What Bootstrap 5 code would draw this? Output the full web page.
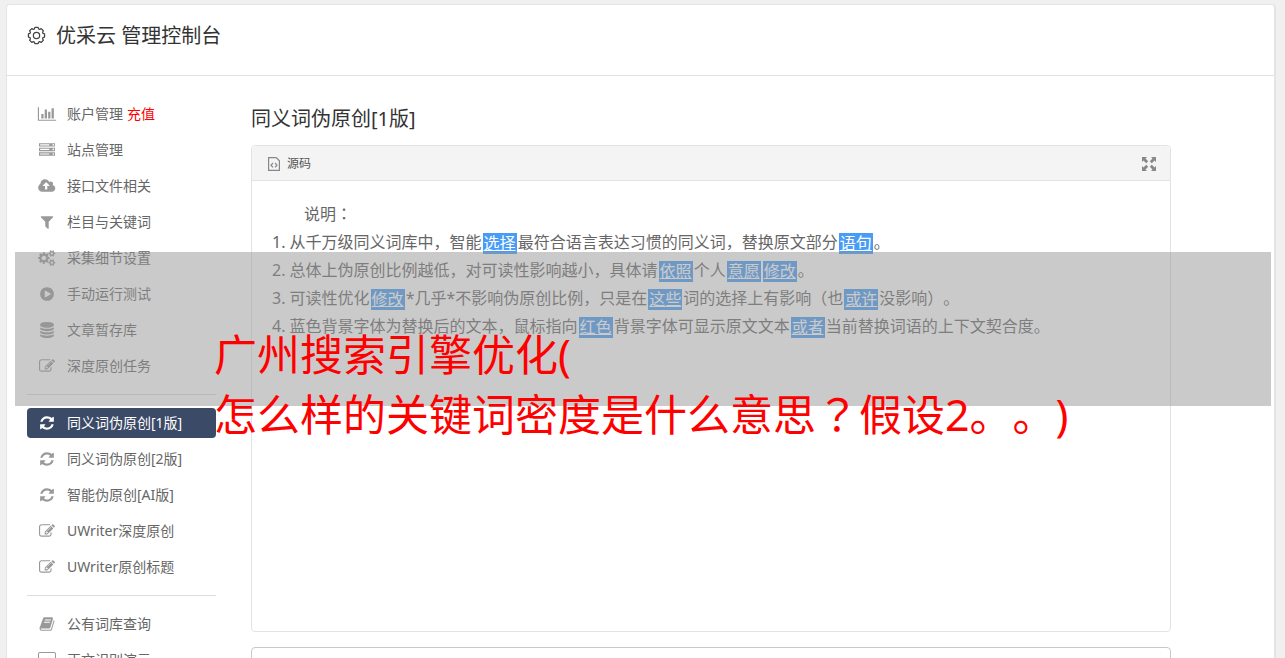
<!DOCTYPE html>
<html lang="zh-CN">
<head>
<meta charset="utf-8">
<meta name="viewport" content="width=device-width, initial-scale=1">
<title>优采云 管理控制台</title>
<link href="https://cdn.jsdelivr.net/npm/bootstrap@5.3.0/dist/css/bootstrap.min.css" rel="stylesheet">
<style>
  body { font-family: "Noto Sans", "Noto Sans CJK SC", sans-serif; font-size: 14px; color: #555; background: #f0f0f0; height: 100vh; overflow: hidden; text-spacing-trim: space-all; }
  .console { margin: 4px 9px 0 6px; background: #fff; border: 1px solid #e4e4e4; border-right-width: 2px; border-radius: 4px 4px 0 0; min-height: 100vh; }
  .console-head { height: 71px; padding: 0 20px 10px; border-bottom: 1px solid #e2e2e2; color: #333; }
  .console-head h1, .main-area h2 { font-size: 20px; line-height: 30px; font-weight: 400; margin: 0; color: #333; }
  .console-head h1 { padding: 2px 0 0 10px; }
  .console-body { padding: 23px 20px 0; gap: 35px; }
  .side { flex: 0 0 189px; }
  .side .nav-link { height: 30px; padding: 0; color: #666; border-radius: 4px; line-height: 30px; white-space: nowrap; }
  .side .nav { gap: 6px; }
  .side .ico { width: 40px; flex: none; color: #999; display: flex; justify-content: center; }
  .side .ico svg { height: 16px; width: 20px; fill: currentColor; }
  .side .nav-link.active { background: #3b4a66; color: #fff; }
  .side .nav-link.active .ico { color: #fff; }
  .side hr { margin: 13px 0; border-color: #ddd; opacity: 1; }
  .side .nav-link.recharge { color: #f00; }
  .main-area { max-width: 920px; min-width: 0; padding-top: 5px; }
  .editor { margin-top: 11px; border-color: #e3e3e3; border-radius: 4px; }
  .editor .card-header { height: 35px; background: #f4f4f4; border-color: #e3e3e3; padding: 2px 14px 0 16px; }
  .tool-btn { border: 0; background: none; padding: 0; color: #555; font-size: 12px; gap: 7px; }
  .editor .card-body { min-height: 450px; padding: 19px 20px; font-size: 16px; line-height: 28px; color: #666; }
  .editor p { margin: 0; }
  .lead-in { text-indent: 2em; }
  .swap { background: #489cf5; color: #fff; margin: 0 1px; padding: 0 1px; display: inline-block; line-height: 21px; height: 21px; vertical-align: middle; }
  .source-box { margin-top: 15px; border: 1px solid #c8c8c8; border-radius: 4px; height: 120px; resize: none; }
  .banner { position: absolute; z-index: 5; top: 252px; left: 15px; right: 14px; height: 154px; padding: 73px 0 0 199px; background: rgba(150, 150, 150, .5); color: #f00; font-size: 43px; line-height: 60px; white-space: nowrap; pointer-events: none; }
  .mid { font-family: "Noto Sans", "Noto Sans CJK TC", sans-serif; }
</style>
</head>
<body>
<svg class="d-none" aria-hidden="true">
  <symbol id="i-chart" viewBox="0 0 2048 1792"><path d="M640 896v512h-256v-512h256zm384-512v1024h-256v-1024h256zm1024 1152v128h-2048v-1536h128v1408h1920zm-640-896v768h-256v-768h256zm384-384v1152h-256v-1152h256z"/></symbol>
  <symbol id="i-server" viewBox="0 0 1792 1792"><path d="M128 1408h1024v-128h-1024v128zm0-512h1024v-128h-1024v128zm1568 448q0-40-28-68t-68-28-68 28-28 68 28 68 68 28 68-28 28-68zm-1568-960h1024v-128h-1024v128zm1568 448q0-40-28-68t-68-28-68 28-28 68 28 68 68 28 68-28 28-68zm0-512q0-40-28-68t-68-28-68 28-28 68 28 68 68 28 68-28 28-68zm96 832v384h-1792v-384h1792zm0-512v384h-1792v-384h1792zm0-512v384h-1792v-384h1792z"/></symbol>
  <symbol id="i-cloud" viewBox="0 0 1856 1792"><path d="M1216 864q0-14-9-23l-352-352q-9-9-23-9t-23 9l-351 351q-10 12-10 24 0 14 9 23t23 9h224v352q0 13 9.5 22.5t22.5 9.5h192q13 0 22.5-9.5t9.5-22.5v-352h224q13 0 22.5-9.5t9.5-22.5zm640 288q0 159-112.5 271.5t-271.5 112.5h-1088q-185 0-316.5-131.5t-131.5-316.5q0-130 70-240t188-165q-2-30-2-43 0-212 150-362t362-150q156 0 285.5 87t188.5 231q71-62 166-62 106 0 181 75t75 181q0 76-41 138 130 31 213.5 135.5t83.5 238.5z"/></symbol>
  <symbol id="i-filter" viewBox="0 0 1792 1792"><path d="M1595 295q17 41-14 70l-493 493v742q0 42-39 59-13 5-25 5-27 0-45-19l-256-256q-19-19-19-45v-486l-493-493q-31-29-14-70 17-39 59-39h1280q42 0 59 39z"/></symbol>
  <symbol id="i-cogs" viewBox="0 0 1856 1792"><path d="M832 896q0-106-75-181t-181-75-181 75-75 181 75 181 181 75 181-75 75-181zm768 512q0-52-38-90t-90-38-90 38-38 90q0 53 37.500 90.500t90.500 37.500 90.500-37.500 37.500-90.500zm0-1024q0-52-38-90t-90-38-90 38-38 90q0 53 37.500 90.500t90.500 37.500 90.500-37.500 37.500-90.500zm-384 421v185q0 10-7 19.500t-16 10.500l-155 24q-11 35-32 76 34 48 90 115 7 11 7 20 0 12-7 19-23 30-82.500 89.500t-78.500 59.500q-11 0-21-7l-115-90q-37 19-77 31-11 108-23 155-7 24-30 24h-186q-11 0-20-7.500t-10-17.500l-23-153q-34-10-75-31l-118 89q-7 7-20 7-11 0-21-8-144-133-144-160 0-9 7-19 10-14 41-53t47-61q-23-44-35-82l-152-24q-10-1-17-9.500t-7-19.500v-185q0-10 7-19.500t16-10.500l155-24q11-35 32-76-34-48-90-115-7-11-7-20 0-12 7-20 22-30 82-89t79-59q11 0 21 7l115 90q34-18 77-32 11-108 23-154 7-24 30-24h186q11 0 20 7.500t10 17.500l23 153q34 10 75 31l118-89q8-7 20-7 11 0 21 8 144 133 144 160 0 8-7 19-12 16-42 54t-45 60q23 48 34 82l152 23q10 2 17 10.500t7 19.500zm640 533v140q0 16-149 31-12 27-30 52 51 113 51 138 0 4-4 7-122 71-124 71-8 0-46-47t-52-68q-20 2-30 2t-30-2q-14 21-52 68t-46 47q-2 0-124-71-4-3-4-7 0-25 51-138-18-25-30-52-149-15-149-31v-140q0-16 149-31 13-29 30-52-51-113-51-138 0-4 4-7 4-2 35-20t59-34 30-16q8 0 46 46.500t52 67.500q20-2 30-2t30 2q51-71 92-112l6-2q4 0 124 70 4 3 4 7 0 25-51 138 17 23 30 52 149 15 149 31zm0-1024v140q0 16-149 31-12 27-30 52 51 113 51 138 0 4-4 7-122 71-124 71-8 0-46-47t-52-68q-20 2-30 2t-30-2q-14 21-52 68t-46 47q-2 0-124-71-4-3-4-7 0-25 51-138-18-25-30-52-149-15-149-31v-140q0-16 149-31 13-29 30-52-51-113-51-138 0-4 4-7 4-2 35-20t59-34 30-16q8 0 46 46.500t52 67.500q20-2 30-2t30 2q51-71 92-112l6-2q4 0 124 70 4 3 4 7 0 25-51 138 17 23 30 52 149 15 149 31z"/></symbol>
  <symbol id="i-play" viewBox="0 0 1792 1792"><path d="M896 128q209 0 385.500 103t279.500 279.500 103 385.500-103 385.500-279.500 279.500-385.500 103-385.500-103-279.500-279.500-103-385.500 103-385.500 279.500-279.500 385.500-103zm384 823q32-18 32-55t-32-55l-544-320q-31-19-64-1-32 19-32 56v640q0 37 32 56 16 8 32 8 17 0 32-9z"/></symbol>
  <symbol id="i-db" viewBox="0 0 1792 1792"><path d="M896 768q237 0 443-43t325-127v170q0 69-103 128t-280 93.500-385 34.500-385-34.500-280-93.500-103-128v-170q119 84 325 127t443 43zm0 768q237 0 443-43t325-127v170q0 69-103 128t-280 93.500-385 34.500-385-34.500-280-93.500-103-128v-170q119 84 325 127t443 43zm0-384q237 0 443-43t325-127v170q0 69-103 128t-280 93.500-385 34.500-385-34.500-280-93.500-103-128v-170q119 84 325 127t443 43zm0-1152q208 0 385 34.500t280 93.500 103 128v128q0 69-103 128t-280 93.500-385 34.500-385-34.500-280-93.500-103-128v-128q0-69 103-128t280-93.500 385-34.500z"/></symbol>
  <symbol id="i-edit" viewBox="0 0 1792 1792"><path d="M888 1184l116-116-152-152-116 116v56h96v96h56zm440-720q-16-16-33 1l-350 350q-17 17-1 33t33-1l350-350q17-17 1-33zm80 594v190q0 119-84.500 203.500t-203.500 84.500h-832q-119 0-203.500-84.500t-84.500-203.500v-832q0-119 84.500-203.500t203.500-84.500h832q63 0 117 25 15 7 18 23 3 17-9 29l-49 49q-14 14-32 8-23-6-45-6h-832q-66 0-113 47t-47 113v832q0 66 47 113t113 47h832q66 0 113-47t47-113v-126q0-13 9-22l64-64q15-15 35-7t20 29zm-96-738l288 288-672 672h-288v-288zm444 132l-92 92-288-288 92-92q28-28 68-28t68 28l152 152q28 28 28 68t-28 68z"/></symbol>
  <symbol id="i-refresh" viewBox="0 0 1792 1792"><path d="M1639 1056q0 5-1 7-64 268-268 434.500t-478 166.500q-146 0-282.500-55t-243.500-157l-129 129q-19 19-45 19t-45-19-19-45v-448q0-26 19-45t45-19h448q26 0 45 19t19 45-19 45l-137 137q71 66 161 102t187 36q134 0 250-65t186-179q11-17 53-117 8-23 30-23h192q13 0 22.500 9.500t9.500 22.500zm25-800v448q0 26-19 45t-45 19h-448q-26 0-45-19t-19-45 19-45l138-138q-148-137-349-137-134 0-250 65t-186 179q-11 17-53 117-8 23-30 23h-199q-13 0-22.500-9.500t-9.500-22.500v-7q65-268 270-434.500t480-166.500q146 0 284 55.500t245 156.500l130-129q19-19 45-19t45 19 19 45z"/></symbol>
  <symbol id="i-book" viewBox="0 0 1792 1792"><path d="M1703 478q40 57 18 129l-275 906q-19 64-76.500 107.500t-122.500 43.500h-923q-77 0-148.500-53.500t-99.500-131.500q-24-67-2-127 0-4 3-27t4-37q1-8-3-21.500t-3-19.500q2-11 8-21t16.500-23.500 16.500-23.500q23-38 45-91.500t30-91.500q3-10 .5-30t-.5-28q3-11 17-28t17-23q21-36 42-92t25-90q1-9-2.500-32t.5-28q4-13 22-30.500t22-22.500q19-26 42.500-84.500t27.500-96.500q1-8-3-25.500t-2-26.500q2-8 9-18t18-23 17-21q8-12 16.500-30.500t15-35 16-36 19.500-32 26.500-23.500 36-11.500 47.500 5.500l-1 3q38-9 51-9h761q74 0 114 56t18 130l-274 906q-36 119-71.500 153.500t-128.500 34.500h-869q-27 0-38 15-11 16-1 43 24 70 144 70h923q29 0 56-15.500t35-41.500l300-987q7-22 5-57 38 15 59 43zm-1064 2q-4 13 2 22.500t20 9.500h608q13 0 25.500-9.500t16.500-22.500l21-64q4-13-2-22.500t-20-9.500h-608q-13 0-25.500 9.500t-16.500 22.500zm-83 256q-4 13 2 22.500t20 9.500h608q13 0 25.500-9.500t16.500-22.500l21-64q4-13-2-22.500t-20-9.500h-608q-13 0-25.500 9.500t-16.500 22.500z"/></symbol>
  <symbol id="i-desktop" viewBox="0 0 18 16"><path fill-rule="evenodd" d="M2 0h14q2 0 2 2v9q0 2-2 2h-5v2h2v1H5v-1h2v-2H2q-2 0-2-2V2q0-2 2-2zm0 1q-1 0-1 1v7h16V2q0-1-1-1z"/></symbol>
</svg>

<div class="console">
  <header class="console-head d-flex align-items-center">
    <svg class="flex-shrink-0" width="19" height="19" viewBox="0 0 20 20" fill="none" stroke="#444" stroke-width="1.3" stroke-linejoin="round" aria-hidden="true"><path d="M8.300 1.500h3.400l.6 1.700 1 .4 1.700-.8 2.200 2.200-.8 1.700.4 1 1.700.6v3.400l-1.700.6-.4 1 .8 1.700-2.200 2.200-1.700-.8-1 .4-.6 1.700H8.300l-.6-1.700-1-.4-1.700.8L2.800 15l.8-1.700-.4-1-1.700-.6V8.300l1.700-.6.4-1L2.800 5 5 2.800l1.700.8 1-.4z"/><circle cx="10" cy="10" r="3.300"/></svg>
    <h1>优采云 管理控制台</h1>
  </header>

  <div class="console-body d-flex">
    <nav class="side">
      <ul class="nav flex-column">
        <li class="d-flex"><a class="nav-link d-flex align-items-center" href="#"><span class="ico"><svg><use href="#i-chart"/></svg></span>账户管理</a><a class="nav-link recharge ms-1" href="#">充值</a></li>
        <li><a class="nav-link d-flex align-items-center" href="#"><span class="ico"><svg><use href="#i-server"/></svg></span>站点管理</a></li>
        <li><a class="nav-link d-flex align-items-center" href="#"><span class="ico"><svg><use href="#i-cloud"/></svg></span>接口文件相关</a></li>
        <li><a class="nav-link d-flex align-items-center" href="#"><span class="ico"><svg><use href="#i-filter"/></svg></span>栏目与关键词</a></li>
        <li><a class="nav-link d-flex align-items-center" href="#"><span class="ico"><svg><use href="#i-cogs"/></svg></span>采集细节设置</a></li>
        <li><a class="nav-link d-flex align-items-center" href="#"><span class="ico"><svg><use href="#i-play"/></svg></span>手动运行测试</a></li>
        <li><a class="nav-link d-flex align-items-center" href="#"><span class="ico"><svg><use href="#i-db"/></svg></span>文章暂存库</a></li>
        <li><a class="nav-link d-flex align-items-center" href="#"><span class="ico"><svg><use href="#i-edit"/></svg></span>深度原创任务</a></li>
      </ul>
      <hr>
      <ul class="nav flex-column">
        <li><a class="nav-link active d-flex align-items-center" aria-current="page" href="#"><span class="ico"><svg><use href="#i-refresh"/></svg></span>同义词伪原创[1版]</a></li>
        <li><a class="nav-link d-flex align-items-center" href="#"><span class="ico"><svg><use href="#i-refresh"/></svg></span>同义词伪原创[2版]</a></li>
        <li><a class="nav-link d-flex align-items-center" href="#"><span class="ico"><svg><use href="#i-refresh"/></svg></span>智能伪原创[AI版]</a></li>
        <li><a class="nav-link d-flex align-items-center" href="#"><span class="ico"><svg><use href="#i-edit"/></svg></span>UWriter深度原创</a></li>
        <li><a class="nav-link d-flex align-items-center" href="#"><span class="ico"><svg><use href="#i-edit"/></svg></span>UWriter原创标题</a></li>
      </ul>
      <hr>
      <ul class="nav flex-column">
        <li><a class="nav-link d-flex align-items-center" href="#"><span class="ico"><svg><use href="#i-book"/></svg></span>公有词库查询</a></li>
        <li><a class="nav-link d-flex align-items-center" href="#"><span class="ico"><svg><use href="#i-desktop"/></svg></span>正文识别演示</a></li>
      </ul>
    </nav>

    <main class="main-area flex-grow-1">
      <h2>同义词伪原创[1版]</h2>
      <section class="card editor">
        <div class="card-header d-flex align-items-center justify-content-between">
          <button type="button" class="tool-btn d-flex align-items-center">
            <svg width="12" height="14" viewBox="0 0 12 14" fill="none" stroke="#888" stroke-width="1.200" aria-hidden="true"><path d="M.6.6h7.600l3.200 3.200v9.600H.6zM5 6L3 8.200l2 2.200M7 6l2 2.200-2 2.200"/></svg>源码
          </button>
          <button type="button" class="tool-btn d-flex" aria-label="全屏">
            <svg width="14" height="14" viewBox="0 0 14 14" fill="#888" aria-hidden="true"><path id="arrow-tl" d="M0 0h5L3.500 1.500 6.200 4.200 4.200 6.200 1.500 3.500 0 5z"/><use href="#arrow-tl" transform="rotate(90 7 7)"/><use href="#arrow-tl" transform="rotate(180 7 7)"/><use href="#arrow-tl" transform="rotate(270 7 7)"/></svg>
          </button>
        </div>
        <div class="card-body">
          <p class="lead-in">说明<span class="mid" lang="zh-TW">：</span></p>
          <p>1. 从千万级同义词库中，智能<u class="swap">选择</u>最符合语言表达习惯的同义词，替换原文部分<u class="swap">语句</u>。</p>
          <p>2. 总体上伪原创比例越低，对可读性影响越小，具体请<u class="swap">依照</u>个人<u class="swap">意愿</u><u class="swap">修改</u>。</p>
          <p>3. 可读性优化<u class="swap">修改</u>*几乎*不影响伪原创比例，只是在<u class="swap">这些</u>词的选择上有影响（也<u class="swap">或许</u>没影响）。</p>
          <p>4. 蓝色背景字体为替换后的文本，鼠标指向<u class="swap">红色</u>背景字体可显示原文文本<u class="swap">或者</u>当前替换词语的上下文契合度。</p>
        </div>
      </section>
      <textarea class="source-box d-block w-100" aria-label="原文"></textarea>
    </main>
  </div>
</div>

<div class="banner">广州搜索引擎优化(<br>怎么样的关键词密度是什么意思<span class="mid" lang="zh-TW">？</span>假设2。。)</div>
<script src="https://cdn.jsdelivr.net/npm/bootstrap@5.3.0/dist/js/bootstrap.bundle.min.js"></script>
</body>
</html>
